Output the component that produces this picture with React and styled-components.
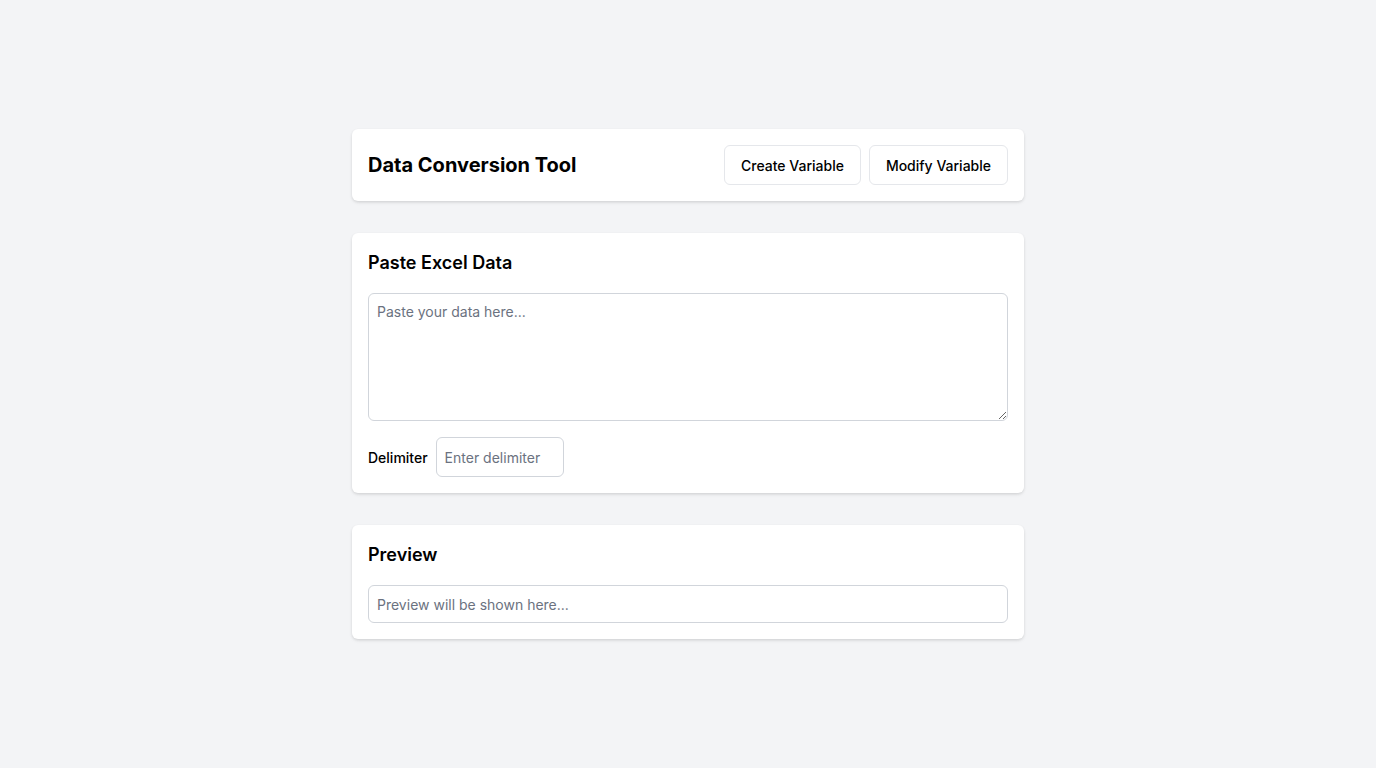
import React from 'react'
import styled, { createGlobalStyle } from 'styled-components'

const GlobalStyle = createGlobalStyle`
  * { box-sizing: border-box; }
  body {
    margin: 0;
    background: #f3f4f6;
    font-family: Inter, "Noto Sans", sans-serif;
    color: #000;
  }
`

function App() {
  return (
    <>
      <GlobalStyle />
      <Page>
        <Column>
          <Card>
            <HeaderRow>
              <Title>Data Conversion Tool</Title>
              <Actions>
                <Button>Create Variable</Button>
                <Button>Modify Variable</Button>
              </Actions>
            </HeaderRow>
          </Card>

          <Card>
            <Heading>Paste Excel Data</Heading>
            <TextArea placeholder="Paste your data here..." />
            <DelimiterRow>
              <Label>Delimiter</Label>
              <SmallInput placeholder="Enter delimiter" />
            </DelimiterRow>
          </Card>

          <Card>
            <Heading>Preview</Heading>
            <WideInput placeholder="Preview will be shown here..." readOnly />
          </Card>
        </Column>
      </Page>
    </>
  )
}

export default App

const Page = styled.div`
  min-height: 100vh;
  display: flex;
  align-items: center;
  justify-content: center;
`

const Column = styled.div`
  width: 672px;
  display: flex;
  flex-direction: column;
  gap: 32px;
`

const Card = styled.div`
  background: #fff;
  border-radius: 6px;
  padding: 16px;
  box-shadow: 0 2px 4px -1px rgb(0 0 0 / 10%), 0 1px 3px 0 rgb(0 0 0 / 8%);
`

const HeaderRow = styled.div`
  display: flex;
  align-items: center;
  justify-content: space-between;
`

const Title = styled.h1`
  margin: 0;
  font-size: 20px;
  line-height: 28px;
  font-weight: 700;
`

const Actions = styled.div`
  display: flex;
  gap: 8px;
`

const Button = styled.button`
  height: 40px;
  padding: 0 16px;
  background: #fff;
  border: 1px solid #e5e7eb;
  border-radius: 6px;
  font-family: inherit;
  font-size: 14px;
  font-weight: 500;
  color: #000;
  cursor: pointer;
`

const Heading = styled.h2`
  margin: 0 0 16px;
  font-size: 18px;
  line-height: 28px;
  font-weight: 600;
`

const fieldBase = `
  border: 1px solid #d1d5db;
  border-radius: 6px;
  font-family: Inter, "Noto Sans", sans-serif;
  font-size: 14px;
  color: #000;
  background: #fff;
  outline: none;
  &::placeholder { color: #6b7280; }
`

const TextArea = styled.textarea`
  ${fieldBase}
  display: block;
  width: 100%;
  height: 128px;
  padding: 8px;
  line-height: 20px;
`

const DelimiterRow = styled.div`
  display: flex;
  align-items: center;
  gap: 8px;
  margin-top: 16px;
`

const Label = styled.label`
  font-size: 14px;
  font-weight: 500;
`

const SmallInput = styled.input`
  ${fieldBase}
  width: 128px;
  height: 40px;
  padding: 0 8px;
`

const WideInput = styled.input`
  ${fieldBase}
  width: 100%;
  height: 38px;
  padding: 0 8px;
`
